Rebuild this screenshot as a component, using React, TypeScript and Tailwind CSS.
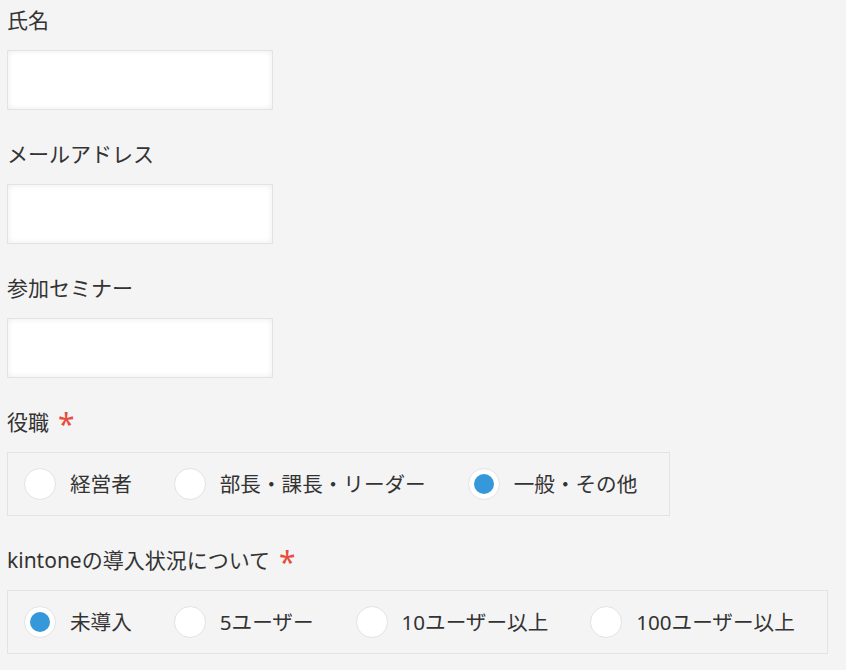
import React, { useState } from "react";

const font = { fontFamily: '"Noto Sans", "Noto Sans CJK JP", sans-serif' };

const Label: React.FC<{ text: string; required?: boolean }> = ({ text, required }) => (
  <div className="h-[40px] leading-[40px] text-[21px] text-[#333333] flex items-center">
    <span>{text}</span>
    {required && <span className="ml-[9px] text-[30px] text-[#e74c3c] leading-none mt-[4px]">*</span>}
  </div>
);

const TextField: React.FC<{ label: string }> = ({ label }) => (
  <div className="mb-[24px]">
    <Label text={label} />
    <input
      type="text"
      className="mt-[10px] block w-[266px] h-[60px] bg-white border border-[#e3e3e3] shadow-[inset_0_0_6px_rgba(0,0,0,0.08)] outline-none px-3"
    />
  </div>
);

const RadioGroup: React.FC<{ label: string; options: string[]; initial: number }> = ({
  label,
  options,
  initial,
}) => {
  const [selected, setSelected] = useState(initial);
  return (
    <div className="mb-[24px]">
      <Label text={label} required />
      <div className="mt-[10px] inline-flex items-center gap-[42px] h-[64px] border border-[#e3e3e3] pl-[16px] pr-[32px]">
        {options.map((opt, i) => (
          <label key={opt} className="flex items-center gap-[14px] cursor-pointer" onClick={() => setSelected(i)}>
            <span className="w-[32px] h-[32px] rounded-full bg-white border border-[#e3e3e3] flex items-center justify-center">
              {selected === i && <span className="w-[20px] h-[20px] rounded-full bg-[#3498db]" />}
            </span>
            <span className="text-[20.6px] text-[#333333]">{opt}</span>
          </label>
        ))}
      </div>
    </div>
  );
};

const App: React.FC = () => {
  return (
    <div className="min-h-screen bg-[#f4f4f4] pl-[7px]" style={font}>
      <TextField label="氏名" />
      <TextField label="メールアドレス" />
      <TextField label="参加セミナー" />
      <RadioGroup label="役職" options={["経営者", "部長・課長・リーダー", "一般・その他"]} initial={2} />
      <RadioGroup
        label="kintoneの導入状況について"
        options={["未導入", "5ユーザー", "10ユーザー以上", "100ユーザー以上"]}
        initial={0}
      />
    </div>
  );
};

export default App;
